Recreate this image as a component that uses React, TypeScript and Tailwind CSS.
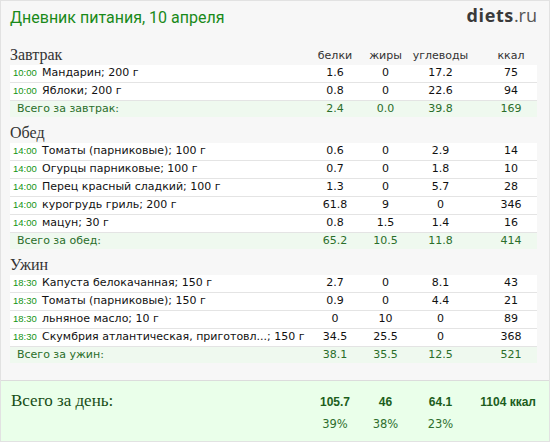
import React from "react";

type Item = [string, string, string, string, string, string];
type Section = {
  title: string;
  items: Item[];
  totalLabel: string;
  total: [string, string, string, string];
  labels?: boolean;
};

const sections: Section[] = [
  {
    title: "Завтрак",
    labels: true,
    items: [
      ["10:00", "Мандарин; 200 г", "1.6", "0", "17.2", "75"],
      ["10:00", "Яблоки; 200 г", "0.8", "0", "22.6", "94"],
    ],
    totalLabel: "Всего за завтрак:",
    total: ["2.4", "0.0", "39.8", "169"],
  },
  {
    title: "Обед",
    items: [
      ["14:00", "Томаты (парниковые); 100 г", "0.6", "0", "2.9", "14"],
      ["14:00", "Огурцы парниковые; 100 г", "0.7", "0", "1.8", "10"],
      ["14:00", "Перец красный сладкий; 100 г", "1.3", "0", "5.7", "28"],
      ["14:00", "курогрудь гриль; 200 г", "61.8", "9", "0", "346"],
      ["14:00", "мацун; 30 г", "0.8", "1.5", "1.4", "16"],
    ],
    totalLabel: "Всего за обед:",
    total: ["65.2", "10.5", "11.8", "414"],
  },
  {
    title: "Ужин",
    items: [
      ["18:30", "Капуста белокачанная; 150 г", "2.7", "0", "8.1", "43"],
      ["18:30", "Томаты (парниковые); 150 г", "0.9", "0", "4.4", "21"],
      ["18:30", "льняное масло; 10 г", "0", "10", "0", "89"],
      ["18:30", "Скумбрия атлантическая, приготовл...; 150 г", "34.5", "25.5", "0", "368"],
    ],
    totalLabel: "Всего за ужин:",
    total: ["38.1", "35.5", "12.5", "521"],
  },
];

const grid = "grid grid-cols-[1fr_50px_51px_59px_67px]";

function SectionBlock({ s, first }: { s: Section; first: boolean }) {
  return (
    <div>
      <div className={`${grid} items-end ${first ? "h-[27px]" : "h-[26px]"}`}>
        <div className="pb-[1px] font-['Liberation_Serif',serif] text-[16px] leading-[18px] text-[#333]">
          {s.title}
        </div>
        {s.labels ? (
          <>
            <div className="pb-[2px] text-center text-[11px] leading-[14px] text-[#333]">белки</div>
            <div className="pb-[2px] text-center text-[11px] leading-[14px] text-[#333]">жиры</div>
            <div className="pb-[2px] text-center text-[11px] leading-[14px] text-[#333]">углеводы</div>
            <div className="pb-[2px] pl-[15px] text-center text-[11px] leading-[14px] text-[#333]">ккал</div>
          </>
        ) : null}
      </div>
      {s.items.map((it, i) => (
        <div
          key={i}
          className={`${grid} h-[18px] items-center border-b border-[#e4e4e4] bg-white text-[11px] text-[#111]`}
        >
          <div className="flex items-center whitespace-nowrap pl-[3px]">
            <span className="w-[29px] font-['Liberation_Sans',sans-serif] text-[9.5px] text-[#149414]">
              {it[0]}
            </span>
            <span>{it[1]}</span>
          </div>
          <div className="text-center">{it[2]}</div>
          <div className="text-center">{it[3]}</div>
          <div className="text-center">{it[4]}</div>
          <div className="pl-[15px] text-center">{it[5]}</div>
        </div>
      ))}
      <div className={`${grid} h-[16px] items-center bg-[#eff9ef] text-[11px] text-[#2a6e2a]`}>
        <div className="whitespace-nowrap pl-[7px]">{s.totalLabel}</div>
        <div className="text-center">{s.total[0]}</div>
        <div className="text-center">{s.total[1]}</div>
        <div className="text-center">{s.total[2]}</div>
        <div className="pl-[15px] text-center">{s.total[3]}</div>
      </div>
    </div>
  );
}

export default function App() {
  return (
    <div className="flex h-[442px] w-[550px] flex-col border border-[#e2e2e2] bg-[#f7f7f7] font-['DejaVu_Sans',sans-serif]">
      <div className="flex flex-1 flex-col pl-[9px] pr-[12px]">
        <div className="flex h-[37px] items-start justify-between">
          <div className="pt-[6px] font-['Roboto',sans-serif] text-[16px] font-normal leading-[22px] text-[#1a8a1a]">
            Дневник питания, 10 апреля
          </div>
          <div className="pt-[3px] font-['Open_Sans',sans-serif] text-[18px] leading-[22px]">
            <span className="font-bold tracking-[0.6px] text-[#3a3a3a]">diets</span>
            <span className="text-[#555]">.ru</span>
          </div>
        </div>
        {sections.map((s, i) => (
          <SectionBlock key={i} s={s} first={i === 0} />
        ))}
      </div>
      <div className="h-[61px] border-t border-[#dcdcdc] bg-[#eaffea] pl-[9px] pr-[12px]">
        <div className={`${grid} items-baseline pt-[10px]`}>
          <div className="pl-[1px] font-['Liberation_Serif',serif] text-[17px] leading-[20px] text-[#164d16]">
            Всего за день:
          </div>
          <div className="text-center font-['Liberation_Sans',sans-serif] text-[12px] font-bold leading-[20px] text-[#1c5e1c]">105.7</div>
          <div className="text-center font-['Liberation_Sans',sans-serif] text-[12px] font-bold leading-[20px] text-[#1c5e1c]">46</div>
          <div className="text-center font-['Liberation_Sans',sans-serif] text-[12px] font-bold leading-[20px] text-[#1c5e1c]">64.1</div>
          <div className="pr-[1px] text-right font-['Liberation_Sans',sans-serif] text-[12px] font-bold leading-[20px] text-[#1c5e1c]">1104 ккал</div>
        </div>
        <div className={`${grid} mt-[4px] text-[11.5px] leading-[16px] text-[#2f6f2f]`}>
          <div />
          <div className="text-center">39%</div>
          <div className="text-center">38%</div>
          <div className="text-center">23%</div>
          <div />
        </div>
      </div>
    </div>
  );
}
